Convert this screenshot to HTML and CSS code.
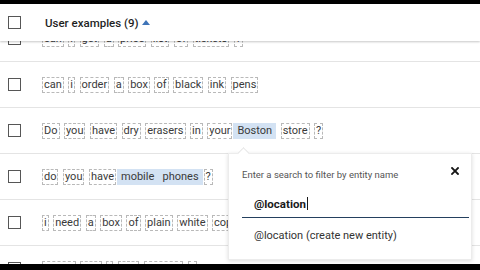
FILE: index.html
```html
<!DOCTYPE html>
<html>
<head>
<meta charset="utf-8">
<link rel="stylesheet" href="styles.css">
</head>
<body>
<div class="frame">
  <div class="viewport">
    <div class="list">
      <div class="row">
        <span class="cb"></span>
        <div class="tokens">
          <span class="tk">can</span><span class="tk">i</span><span class="tk">get</span><span class="tk">a</span><span class="tk">price</span><span class="tk">list</span><span class="tk">of</span><span class="tk">tickets</span><span class="tk">?</span>
        </div>
      </div>
      <div class="row">
        <span class="cb"></span>
        <div class="tokens">
          <span class="tk">can</span><span class="tk">i</span><span class="tk">order</span><span class="tk">a</span><span class="tk">box</span><span class="tk">of</span><span class="tk">black</span><span class="tk">ink</span><span class="tk">pens</span>
        </div>
      </div>
      <div class="row">
        <span class="cb"></span>
        <div class="tokens">
          <span class="tk">Do</span><span class="tk">you</span><span class="tk">have</span><span class="tk">dry</span><span class="tk">erasers</span><span class="tk">in</span><span class="tk">your</span><span class="tk hl">Boston</span><span class="tk">store</span><span class="tk">?</span>
        </div>
      </div>
      <div class="row">
        <span class="cb"></span>
        <div class="tokens">
          <span class="tk">do</span><span class="tk">you</span><span class="tk">have</span><span class="tk hl">mobile&nbsp;&nbsp;&nbsp;phones</span><span class="tk tight">?</span>
        </div>
      </div>
      <div class="row">
        <span class="cb"></span>
        <div class="tokens">
          <span class="tk">i</span><span class="tk">need</span><span class="tk">a</span><span class="tk">box</span><span class="tk">of</span><span class="tk">plain</span><span class="tk">white</span><span class="tk">copy</span><span class="tk">paper</span>
        </div>
      </div>
      <div class="row">
        <span class="cb"></span>
        <div class="tokens">
          <span class="tk">where</span><span class="tk">can</span><span class="tk">i</span><span class="tk">buy</span><span class="tk">staples</span><span class="tk">?</span>
        </div>
      </div>
    </div>

    <div class="header">
      <span class="cb"></span>
      <span class="title">User examples (9)</span>
      <svg class="sort" width="8" height="5" viewBox="0 0 8 5"><polygon points="0,5 4,0 8,5" fill="#3f74b8"/></svg>
    </div>

    <div class="popover">
      <span class="arrow"></span>
      <div class="pop-head">
        <span class="pop-label">Enter a search to filter by entity name</span>
        <svg class="close" width="8" height="8" viewBox="0 0 8 8"><path d="M1 1 L7 7 M7 1 L1 7" stroke="#161616" stroke-width="1.8" stroke-linecap="square"/></svg>
      </div>
      <div class="pop-input"><span class="typed">@location</span><span class="caret"></span></div>
      <div class="pop-option">@location (create new entity)</div>
    </div>
  </div>
</div>
</body>
</html>
```

FILE: styles.css
```css
* { box-sizing: border-box; }
html, body { margin: 0; padding: 0; background: #000; }
body { font-family: Roboto, "Open Sans", sans-serif; color: #161616; }

.frame {
  width: 480px;
  height: 270px;
  border-top: 4px solid #000;
  border-bottom: 6px solid #000;
  background: #fff;
}

.viewport {
  position: relative;
  height: 260px;
  overflow: hidden;
  background: #fff;
}

.list { padding-top: 12px; }

.row {
  height: 46px;
  border-bottom: 1px solid #e4e4e4;
  display: flex;
  align-items: center;
  padding-left: 8px;
}

.cb {
  width: 13px;
  height: 13px;
  border: 1.5px solid #565656;
  flex: none;
}

.tokens {
  display: flex;
  gap: 4.5px;
  margin-left: 21px;
  white-space: nowrap;
}

.tk {
  font-size: 11px;
  line-height: 14px;
  color: #3a3a3a;
  padding: 0 1px;
  border: 1px dashed #b9b9b9;
}

.tk.hl {
  background: #d3e2f3;
  border-color: #d3e2f3;
  padding: 0 3px;
  margin-left: -3.5px;
}

.tk.tight { margin-left: -3.5px; }

.header {
  position: absolute;
  top: 0;
  left: 0;
  right: 0;
  height: 37px;
  background: #fff;
  box-shadow: 0 1px 2px rgba(0,0,0,0.22);
  display: flex;
  align-items: center;
  padding-left: 8px;
}

.title {
  margin-left: 24px;
  font-size: 11.5px;
  font-weight: 500;
  color: #1f1f1f;
}

.sort { margin-left: 3px; margin-top: -1px; }

.popover {
  position: absolute;
  left: 228px;
  top: 149px;
  width: 244px;
  height: 107px;
  background: #fff;
  border: 1px solid #ececec;
  box-shadow: 0 1px 4px rgba(0,0,0,0.14);
  padding: 0 2px 0 13px;
}

.arrow {
  position: absolute;
  left: 10px;
  top: -5px;
  width: 9px;
  height: 9px;
  background: #fff;
  border-left: 1px solid #e6e6e6;
  border-top: 1px solid #e6e6e6;
  transform: rotate(45deg);
}

.pop-head {
  display: flex;
  justify-content: space-between;
  align-items: center;
  height: 40px;
  padding-right: 10px;
}

.pop-label {
  font-size: 9.5px;
  color: #555;
}

.close { margin-top: -6px; }

.pop-input {
  height: 24px;
  border-bottom: 1.5px solid #24405e;
  display: flex;
  align-items: center;
  padding-left: 12px;
  padding-bottom: 4px;
}

.typed {
  font-size: 11.5px;
  font-weight: 700;
  color: #1a1a1a;
}

.caret {
  width: 1px;
  height: 13px;
  background: #1a1a1a;
  margin-left: 1px;
}

.pop-option {
  font-size: 11px;
  color: #333;
  padding-left: 12px;
  margin-top: 11px;
}
```
